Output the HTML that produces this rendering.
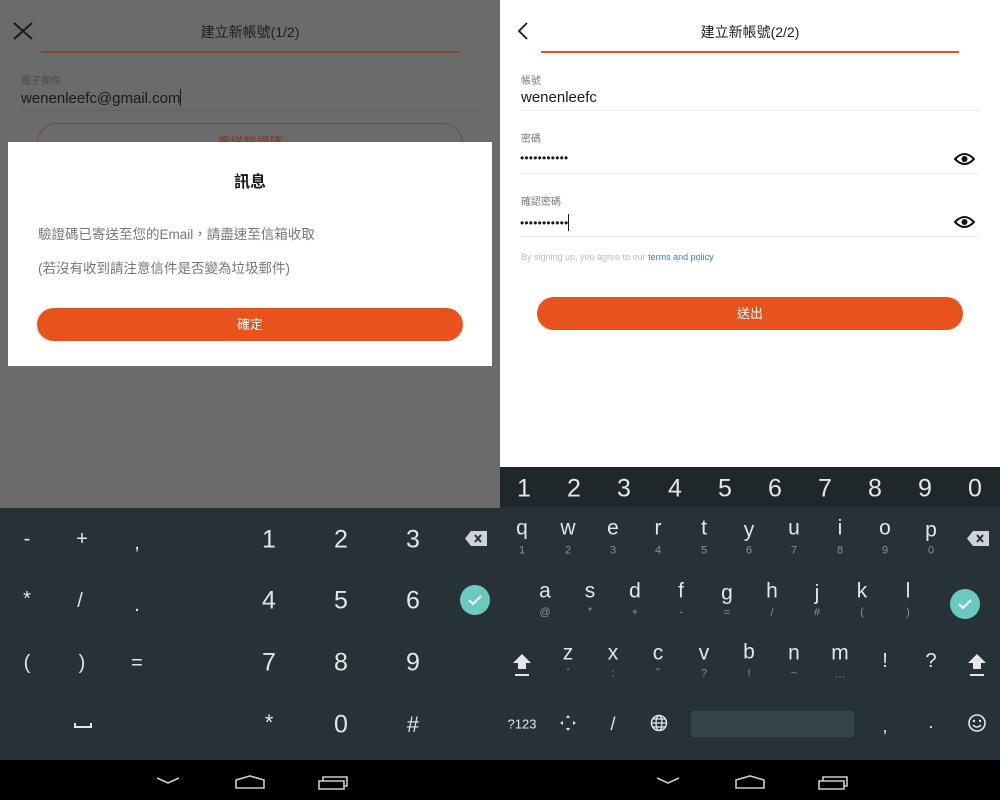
<!DOCTYPE html>
<html><head><meta charset="utf-8"><style>
*{margin:0;padding:0;box-sizing:border-box}
body{width:1000px;height:800px;position:relative;overflow:hidden;font-family:"Liberation Sans","Noto Sans CJK TC",sans-serif;background:#fff}
.a{position:absolute}
.k{position:absolute;transform:translate(-50%,-50%);color:#e4e6e7;font-size:24px;line-height:1;white-space:nowrap}
.s{position:absolute;transform:translate(-50%,-50%);color:#8a9297;font-size:11px;line-height:1}
.n{position:absolute;transform:translate(-50%,-50%);color:#e4e6e7;font-size:25px;line-height:1}
.dots{letter-spacing:0.2px}
</style></head><body>
<div class="a" style="left:0;top:0;width:500px;height:508px;background:#6b6b6b"></div>
<svg class="a" style="left:12px;top:21px" width="22" height="20"><path d="M2 2L20 18M20 2L2 18" stroke="#1a1a1a" stroke-width="2"/></svg>
<div class="a" style="left:0;width:500px;top:22px;text-align:center;font-size:14px;color:#1e1e1e">建立新帳號(1/2)</div>
<div class="a" style="left:41px;top:51px;width:418px;height:2px;background:#7a4a36"></div>
<div class="a" style="left:21px;top:72px;font-size:10px;color:#4a4a4a">電子郵件</div>
<div class="a" style="left:21px;top:89px;font-size:15px;color:#1a1a1a">wenenleefc@gmail.com<span style="display:inline-block;width:1px;height:17px;background:#1a1a1a;vertical-align:-3px"></span></div>
<div class="a" style="left:20px;top:110px;width:460px;height:1px;background:#626262"></div>
<div class="a" style="left:37px;top:123px;width:426px;height:40px;border:1px solid #7a4a36;border-radius:20px"></div>
<div class="a" style="left:0;top:132px;width:500px;text-align:center;font-size:13px;color:#7a3a20">重送驗證碼</div>
<div class="a" style="left:8px;top:142px;width:484px;height:224px;background:#fff"></div>
<div class="a" style="left:8px;top:168px;width:484px;text-align:center;font-size:16px;color:#1a1a1a;font-weight:bold">訊息</div>
<div class="a" style="left:38px;top:223px;font-size:13.5px;color:#777">驗證碼已寄送至您的Email，請盡速至信箱收取</div>
<div class="a" style="left:38px;top:257px;font-size:13.5px;color:#777">(若沒有收到請注意信件是否變為垃圾郵件)</div>
<div class="a" style="left:37px;top:308px;width:426px;height:33px;background:#e8531d;border-radius:17px;color:#fff;font-size:13px;text-align:center;line-height:33px">確定</div>
<div class="a" style="left:0;top:508px;width:500px;height:252px;background:#263238"></div>
<span class="k" style="left:27px;top:539px;font-size:20px">-</span>
<span class="k" style="left:82px;top:539px;font-size:20px">+</span>
<span class="k" style="left:137px;top:543px;font-size:20px">,</span>
<span class="k" style="left:27px;top:599px;font-size:20px">*</span>
<span class="k" style="left:80px;top:601px;font-size:20px">/</span>
<span class="k" style="left:137px;top:605px;font-size:20px">.</span>
<span class="k" style="left:27px;top:663px;font-size:20px">(</span>
<span class="k" style="left:82px;top:663px;font-size:20px">)</span>
<span class="k" style="left:137px;top:663px;font-size:20px">=</span>
<div class="a" style="left:74px;top:723px;width:18px;height:5px;border:2px solid #e4e6e7;border-top:none"></div>
<span class="n" style="left:269px;top:540px">1</span><span class="n" style="left:341px;top:540px">2</span><span class="n" style="left:413px;top:540px">3</span>
<span class="n" style="left:269px;top:601px">4</span><span class="n" style="left:341px;top:601px">5</span><span class="n" style="left:413px;top:601px">6</span>
<span class="n" style="left:269px;top:663px">7</span><span class="n" style="left:341px;top:663px">8</span><span class="n" style="left:413px;top:663px">9</span>
<span class="k" style="left:269px;top:723px;font-size:22px">*</span><span class="n" style="left:341px;top:725px">0</span><span class="k" style="left:413px;top:725px;font-size:22px">#</span>
<svg class="a" style="left:465px;top:531px" width="22" height="15"><path d="M6 0H22V15H6L0 7.5Z" fill="#cfd3d5"/><path d="M10 4L16 11M16 4L10 11" stroke="#263238" stroke-width="2"/></svg>
<svg class="a" style="left:460px;top:585px" width="30" height="30"><circle cx="15" cy="15" r="15" fill="#6cc9c0"/><path d="M9 15L13 19L21 11" stroke="#fff" stroke-width="2" fill="none"/></svg>
<svg class="a" style="left:516px;top:21px" width="14" height="20"><path d="M11 2L3 10L11 18" stroke="#1a1a1a" stroke-width="1.8" fill="none"/></svg>
<div class="a" style="left:500px;width:500px;top:22px;text-align:center;font-size:14px;color:#1e1e1e">建立新帳號(2/2)</div>
<div class="a" style="left:541px;top:51px;width:418px;height:2px;background:#e8531d"></div>
<div class="a" style="left:521px;top:72px;font-size:10px;color:#777">帳號</div>
<div class="a" style="left:521px;top:89px;font-size:15px;color:#1a1a1a">wenenleefc</div>
<div class="a" style="left:520px;top:110px;width:460px;height:1px;background:#eee"></div>
<div class="a" style="left:521px;top:130px;font-size:10px;color:#777">密碼</div>
<div class="a dots" style="left:520px;top:151px;font-size:12px;color:#1a1a1a">•••••••••••</div>
<div class="a" style="left:520px;top:173px;width:460px;height:1px;background:#eee"></div>
<div class="a" style="left:521px;top:193px;font-size:10px;color:#777">確認密碼</div>
<div class="a dots" style="left:520px;top:214px;font-size:12px;color:#1a1a1a">•••••••••••<span style="display:inline-block;width:1px;height:17px;background:#1a1a1a;vertical-align:-4px"></span></div>
<div class="a" style="left:520px;top:236px;width:460px;height:1px;background:#eee"></div>
<svg class="a" style="left:954px;top:152px" width="21" height="14"><path d="M1 7Q10.5 -3 20 7Q10.5 17 1 7Z" stroke="#111" stroke-width="2" fill="none"/><circle cx="10.5" cy="7" r="3" fill="#111"/></svg>
<svg class="a" style="left:954px;top:215px" width="21" height="14"><path d="M1 7Q10.5 -3 20 7Q10.5 17 1 7Z" stroke="#111" stroke-width="2" fill="none"/><circle cx="10.5" cy="7" r="3" fill="#111"/></svg>
<div class="a" style="left:521px;top:252px;font-size:9px;color:#bbb">By signing up, you agree to our <span style="color:#2a86c0">terms and policy</span></div>
<div class="a" style="left:537px;top:297px;width:426px;height:33px;background:#e8531d;border-radius:17px;color:#fff;font-size:13px;text-align:center;line-height:33px">送出</div>
<div class="a" style="left:500px;top:467px;width:500px;height:40px;background:#20272b"></div>
<div class="a" style="left:500px;top:507px;width:500px;height:253px;background:#263238"></div>
<span class="n" style="left:524px;top:489px">1</span><span class="n" style="left:574px;top:489px">2</span><span class="n" style="left:624px;top:489px">3</span><span class="n" style="left:675px;top:489px">4</span><span class="n" style="left:725px;top:489px">5</span><span class="n" style="left:775px;top:489px">6</span><span class="n" style="left:825px;top:489px">7</span><span class="n" style="left:875px;top:489px">8</span><span class="n" style="left:925px;top:489px">9</span><span class="n" style="left:975px;top:489px">0</span>
<span class="k" style="left:522px;top:528px;font-size:21px">q</span><span class="s" style="left:522px;top:551px">1</span>
<span class="k" style="left:568px;top:528px;font-size:21px">w</span><span class="s" style="left:568px;top:551px">2</span>
<span class="k" style="left:613px;top:528px;font-size:21px">e</span><span class="s" style="left:613px;top:551px">3</span>
<span class="k" style="left:658px;top:528px;font-size:21px">r</span><span class="s" style="left:658px;top:551px">4</span>
<span class="k" style="left:704px;top:528px;font-size:21px">t</span><span class="s" style="left:704px;top:551px">5</span>
<span class="k" style="left:749px;top:530px;font-size:21px">y</span><span class="s" style="left:749px;top:551px">6</span>
<span class="k" style="left:794px;top:528px;font-size:21px">u</span><span class="s" style="left:794px;top:551px">7</span>
<span class="k" style="left:840px;top:528px;font-size:21px">i</span><span class="s" style="left:840px;top:551px">8</span>
<span class="k" style="left:885px;top:528px;font-size:21px">o</span><span class="s" style="left:885px;top:551px">9</span>
<span class="k" style="left:931px;top:530px;font-size:21px">p</span><span class="s" style="left:931px;top:551px">0</span>
<svg class="a" style="left:967px;top:531px" width="22" height="15"><path d="M6 0H22V15H6L0 7.5Z" fill="#cfd3d5"/><path d="M10 4L16 11M16 4L10 11" stroke="#263238" stroke-width="2"/></svg>
<span class="k" style="left:545px;top:591px;font-size:21px">a</span><span class="s" style="left:545px;top:613px">@</span>
<span class="k" style="left:590px;top:591px;font-size:21px">s</span><span class="s" style="left:590px;top:612px">*</span>
<span class="k" style="left:635px;top:591px;font-size:21px">d</span><span class="s" style="left:635px;top:613px">+</span>
<span class="k" style="left:681px;top:591px;font-size:21px">f</span><span class="s" style="left:681px;top:613px">-</span>
<span class="k" style="left:727px;top:593px;font-size:21px">g</span><span class="s" style="left:727px;top:613px">=</span>
<span class="k" style="left:772px;top:591px;font-size:21px">h</span><span class="s" style="left:772px;top:613px">/</span>
<span class="k" style="left:817px;top:593px;font-size:21px">j</span><span class="s" style="left:817px;top:613px">#</span>
<span class="k" style="left:862px;top:591px;font-size:21px">k</span><span class="s" style="left:862px;top:613px">(</span>
<span class="k" style="left:908px;top:591px;font-size:21px">l</span><span class="s" style="left:908px;top:613px">)</span>
<svg class="a" style="left:950px;top:589px" width="30" height="30"><circle cx="15" cy="15" r="15" fill="#6cc9c0"/><path d="M9 15L13 19L21 11" stroke="#fff" stroke-width="2" fill="none"/></svg>
<svg class="a" style="left:512px;top:653px" width="20" height="26"><path d="M10 1L19 10H14V16H6V10H1Z" fill="#e4e6e7"/><rect x="3" y="21" width="14" height="2" fill="#e4e6e7"/></svg>
<span class="k" style="left:568px;top:653px;font-size:21px">z</span><span class="s" style="left:568px;top:673px">'</span>
<span class="k" style="left:613px;top:653px;font-size:21px">x</span><span class="s" style="left:613px;top:674px">:</span>
<span class="k" style="left:658px;top:653px;font-size:21px">c</span><span class="s" style="left:658px;top:673px">"</span>
<span class="k" style="left:704px;top:653px;font-size:21px">v</span><span class="s" style="left:704px;top:674px">?</span>
<span class="k" style="left:749px;top:652px;font-size:21px">b</span><span class="s" style="left:749px;top:674px">!</span>
<span class="k" style="left:794px;top:653px;font-size:21px">n</span><span class="s" style="left:794px;top:674px">~</span>
<span class="k" style="left:840px;top:653px;font-size:21px">m</span><span class="s" style="left:840px;top:675px">…</span>
<span class="k" style="left:885px;top:661px;font-size:20px">!</span>
<span class="k" style="left:931px;top:661px;font-size:20px">?</span>
<svg class="a" style="left:967px;top:653px" width="20" height="26"><path d="M10 1L19 10H14V16H6V10H1Z" fill="#e4e6e7"/><rect x="3" y="21" width="14" height="2" fill="#e4e6e7"/></svg>
<span class="k" style="left:522px;top:724px;font-size:13px">?123</span>
<svg class="a" style="left:559px;top:714px" width="18" height="18"><path d="M9 1L11 4H7ZM9 17L11 14H7ZM1 9L4 7V11ZM17 9L14 7V11Z" fill="#e4e6e7"/></svg>
<span class="k" style="left:613px;top:724px;font-size:18px">/</span>
<svg class="a" style="left:650px;top:714px" width="18" height="18"><circle cx="9" cy="9" r="7.5" stroke="#e4e6e7" stroke-width="1.5" fill="none"/><ellipse cx="9" cy="9" rx="3" ry="7.5" stroke="#e4e6e7" stroke-width="1.3" fill="none"/><path d="M1.5 9H16.5M3 5H15M3 13H15" stroke="#e4e6e7" stroke-width="1.2"/></svg>
<div class="a" style="left:691px;top:711px;width:163px;height:26px;background:#37434a;border-radius:3px"></div>
<span class="k" style="left:885px;top:726px;font-size:18px">,</span>
<span class="k" style="left:931px;top:722px;font-size:18px">.</span>
<svg class="a" style="left:967px;top:713px" width="20" height="20"><circle cx="10" cy="10" r="8" stroke="#e4e6e7" stroke-width="1.6" fill="none"/><circle cx="7" cy="8" r="1.2" fill="#e4e6e7"/><circle cx="13" cy="8" r="1.2" fill="#e4e6e7"/><path d="M6 12Q10 16 14 12" stroke="#e4e6e7" stroke-width="1.5" fill="none"/></svg>
<div class="a" style="left:0;top:760px;width:1000px;height:40px;background:#000"></div>
<svg class="a" style="left:155px;top:775px" width="200" height="16"><path d="M2 3L13 8L24 3" stroke="#ccc" stroke-width="1.6" fill="none"/><path d="M81 13V5L95 1L109 5V13Z" stroke="#ccc" stroke-width="1.6" fill="none"/><path d="M164 6H189V14H164ZM168 6V2H192V11H189" stroke="#ccc" stroke-width="1.6" fill="none"/></svg>
<svg class="a" style="left:655px;top:775px" width="200" height="16"><path d="M2 3L13 8L24 3" stroke="#ccc" stroke-width="1.6" fill="none"/><path d="M81 13V5L95 1L109 5V13Z" stroke="#ccc" stroke-width="1.6" fill="none"/><path d="M164 6H189V14H164ZM168 6V2H192V11H189" stroke="#ccc" stroke-width="1.6" fill="none"/></svg>
</body></html>
